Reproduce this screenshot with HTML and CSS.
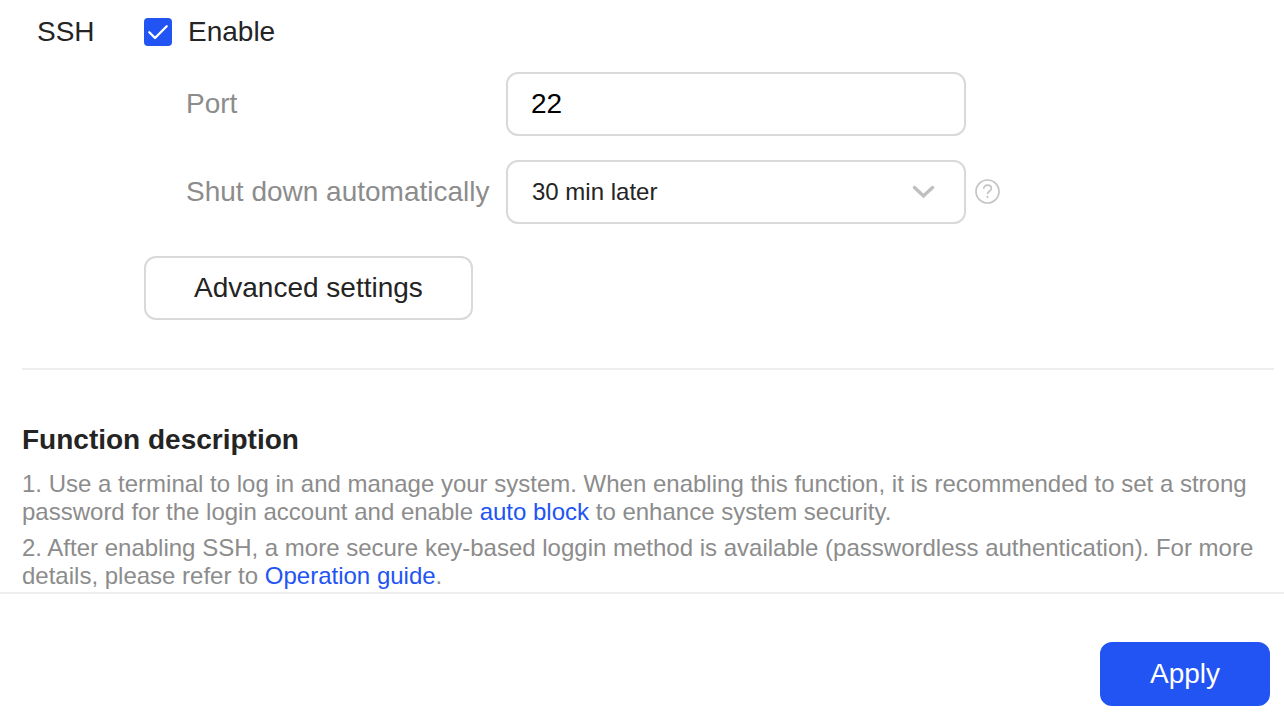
FILE: index.html
```html
<!DOCTYPE html>
<html lang="en">
<head>
<meta charset="utf-8">
<title>SSH settings</title>
<link rel="stylesheet" href="styles.css">
</head>
<body>
<form class="page">
  <main class="content">
    <section class="ssh">
      <div class="row row-enable">
        <span class="row-title">SSH</span>
        <label class="check"><input class="check-box" type="checkbox" checked>Enable</label>
      </div>
      <div class="row row-field">
        <label class="field-label" for="port">Port</label>
        <input class="control" id="port" type="text" value="22">
      </div>
      <div class="row row-field">
        <label class="field-label" for="shutdown">Shut down automatically</label>
        <div class="select-wrap">
          <select class="control control-select" id="shutdown"><option>30 min later</option></select>
          <svg class="chevron" viewBox="0 0 24 16" aria-hidden="true"><path d="M2.500 3.500l9 8.500 9-8.500"/></svg>
        </div>
        <button class="help" type="button" aria-label="Help">
          <svg class="help-icon" viewBox="0 0 26 26" aria-hidden="true"><circle cx="12.500" cy="12.500" r="11.500"/><path d="M8.700 9.800c0-2.200 1.500-3.600 3.800-3.600s3.800 1.300 3.800 3.200c0 2.700-3.800 2.900-3.800 5.600"/><path d="M12.500 16.800v2.200"/></svg>
        </button>
      </div>
      <button class="btn btn-outline" type="button">Advanced settings</button>
    </section>
    <section class="description">
      <h2 class="description-title">Function description</h2>
      <p class="description-text">1. Use a terminal to log in and manage your system. When enabling this function, it is recommended to set a strong password for the login account and enable <a class="link" href="#">auto block</a> to enhance system security.</p>
      <p class="description-text">2. After enabling SSH, a more secure key-based loggin method is available (passwordless authentication). For more details, please refer to <a class="link" href="#">Operation guide</a>.</p>
    </section>
  </main>
  <footer class="footer">
    <button class="btn btn-primary" type="submit">Apply</button>
  </footer>
</form>
</body>
</html>
```
FILE: styles.css
```css
* {
  box-sizing: border-box;
}

body {
  margin: 0;
  background: #fff;
  color: #242424;
  font: 28px/32px "Liberation Sans", Arial, sans-serif;
}

.content {
  padding: 0 10px 2px 22px;
}

.ssh {
  padding: 16px 0 48px;
  border-bottom: 2px solid #eee;
}

.row {
  display: flex;
  align-items: center;
}

.row-enable {
  margin-bottom: 24px;
}

.row-title {
  width: 122px;
  padding-left: 15px;
}

.check {
  display: flex;
  align-items: center;
  gap: 16px;
}

.check-box {
  appearance: none;
  width: 28px;
  height: 28px;
  margin: 0;
  border-radius: 4px;
  background: #2254f4;
}

.check-box:checked {
  background-image: url("data:image/svg+xml,%3Csvg xmlns='http://www.w3.org/2000/svg' viewBox='0 0 28 28'%3E%3Cpath d='M5.300 14.300l5.700 5.700L22.700 8.200' fill='none' stroke='white' stroke-width='2.300' stroke-linecap='round' stroke-linejoin='round'/%3E%3C/svg%3E");
}

.row-field {
  margin-bottom: 24px;
  padding-left: 164px;
}

.field-label {
  flex: none;
  width: 320px;
  color: #8c8c8c;
}

.control {
  width: 460px;
  max-width: 100%;
  height: 64px;
  padding: 0 23px;
  border: 2px solid #d9d9d9;
  border-radius: 12px;
  background: #fff;
  color: #000;
  font: inherit;
}

.control-select {
  padding: 0 24px;
  appearance: none;
  color: #242424;
  font-size: 24px;
}

.select-wrap {
  position: relative;
}

.chevron {
  position: absolute;
  top: 24px;
  right: 30px;
  width: 24px;
  height: 16px;
  fill: none;
  stroke: #bfbfbf;
  stroke-width: 3.4;
  stroke-linecap: round;
  pointer-events: none;
}

.help {
  display: flex;
  flex: none;
  margin-left: 9px;
  padding: 0;
  border: 0;
  background: none;
}

.help-icon {
  width: 26px;
  height: 26px;
  fill: none;
  stroke: #c4c4c4;
  stroke-width: 1.7;
}

.btn {
  height: 64px;
  padding: 0 48px;
  border: 2px solid #d9d9d9;
  border-radius: 12px;
  background: #fff;
  color: #242424;
  font: inherit;
}

.btn-outline {
  display: block;
  margin: 32px 0 0 122px;
}

.description {
  padding-top: 54px;
}

.description-title {
  margin: 0 0 14px;
  font-size: 28px;
  line-height: 32px;
}

.description-text {
  margin: 0 0 8px;
  color: #8c8c8c;
  font-size: 24px;
  line-height: 28px;
}

.description-text:last-child {
  margin-bottom: 0;
}

.link {
  color: #2254f4;
  text-decoration: none;
}

.footer {
  display: flex;
  justify-content: flex-end;
  padding: 48px 14px 12px;
  border-top: 2px solid #eee;
}

.btn-primary {
  border-color: #2254f4;
  background: #2254f4;
  color: #fff;
}
```
